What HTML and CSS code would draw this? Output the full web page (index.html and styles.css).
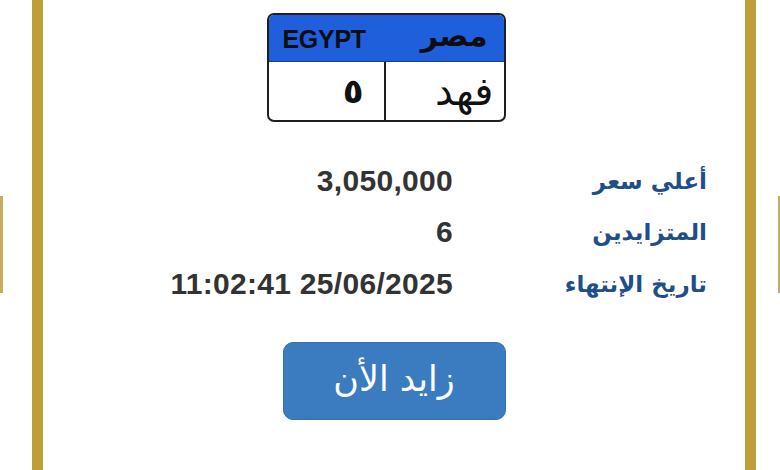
FILE: index.html
```html
<!DOCTYPE html>
<html lang="ar">
<head>
<meta charset="utf-8">
<link rel="stylesheet" href="styles.css">
</head>
<body>
<div class="side side-left"></div>
<div class="side side-right"></div>
<main class="card">
  <div class="plate-wrap">
    <div class="plate">
      <div class="plate-head">
        <span class="plate-en">EGYPT</span>
        <span class="plate-ar" dir="rtl">مصر</span>
      </div>
      <div class="plate-body">
        <div class="cell cell-num" dir="rtl">٥</div>
        <div class="cell cell-letters" dir="rtl">فهد</div>
      </div>
    </div>
  </div>
  <div class="info">
    <div class="val">3,050,000</div>
    <div class="lbl" dir="rtl">أعلي سعر</div>
    <div class="val">6</div>
    <div class="lbl" dir="rtl">المتزايدين</div>
    <div class="val">11:02:41 25/06/2025</div>
    <div class="lbl" dir="rtl">تاريخ الإنتهاء</div>
  </div>
  <div class="btn-row">
    <button class="bid" dir="rtl">زايد الأن</button>
  </div>
</main>
</body>
</html>
```
FILE: styles.css
```css
html, body {
  margin: 0;
  padding: 0;
  background: #ffffff;
  height: 470px;
  overflow: hidden;
}
body {
  position: relative;
  font-family: "Liberation Sans", "DejaVu Sans", sans-serif;
}
.side {
  position: absolute;
  top: 196px;
  height: 97px;
  background: #c8ad5e;
}
.side-left { left: 0; width: 3px; }
.side-right { right: 0; width: 2px; }

.card {
  margin-left: 32px;
  width: 702px;
  height: 470px;
  border-left: 11px solid #bd9f3a;
  border-right: 11px solid #bd9f3a;
  display: flex;
  flex-direction: column;
}
.plate-wrap {
  display: flex;
  justify-content: center;
  padding-top: 13px;
  padding-right: 16px;
}
.plate {
  width: 235px;
  height: 105px;
  border: 2px solid #1f1f1f;
  border-radius: 7px;
  overflow: hidden;
  display: flex;
  flex-direction: column;
}
.plate-head {
  height: 46px;
  background: #1f5fdc;
  display: flex;
  align-items: center;
  justify-content: space-between;
  padding: 0 16px 0 14px;
  border-bottom: 1px solid #1a3f8a;
}
.plate-en {
  font-family: "Liberation Sans", Arial, sans-serif;
  font-weight: bold;
  font-size: 25px;
  letter-spacing: -0.3px;
  color: #0d0d12;
  padding-top: 2px;
}
.plate-ar {
  font-family: "DejaVu Sans", sans-serif;
  font-weight: bold;
  font-size: 30px;
  color: #0d0d12;
  padding-bottom: 6px;
}
.plate-body {
  flex: 1;
  display: flex;
}
.cell {
  display: flex;
  align-items: center;
  color: #111;
  font-family: "DejaVu Sans", sans-serif;
}
.cell-num {
  width: 117px;
  border-right: 2px solid #1f1f1f;
  justify-content: flex-start;
  padding-right: 20px;
  box-sizing: border-box;
  font-size: 34px;
  font-weight: bold;
}
.cell-letters {
  flex: 1;
  justify-content: flex-start;
  padding-right: 10px;
  font-size: 40px;
}

.info {
  margin-top: 33px;
  display: grid;
  grid-template-columns: 410px 1fr;
  grid-auto-rows: 51.5px;
  padding-right: 38px;
  align-items: center;
}
.val {
  text-align: right;
  font-family: "Liberation Sans", Arial, sans-serif;
  font-weight: bold;
  font-size: 30px;
  color: #333333;
  letter-spacing: 0.3px;
}
.lbl {
  text-align: right;
  font-family: "DejaVu Sans", sans-serif;
  font-weight: bold;
  font-size: 23px;
  color: #1f4f88;
}

.btn-row {
  display: flex;
  justify-content: center;
  margin-top: 32px;
}
.bid {
  width: 223px;
  height: 78px;
  border: 1px solid #3470b0;
  border-radius: 10px;
  background: #3b7bbf;
  color: #ffffff;
  font-family: "DejaVu Sans", sans-serif;
  font-size: 35px;
  padding: 0 0 4px 0;
}
```
